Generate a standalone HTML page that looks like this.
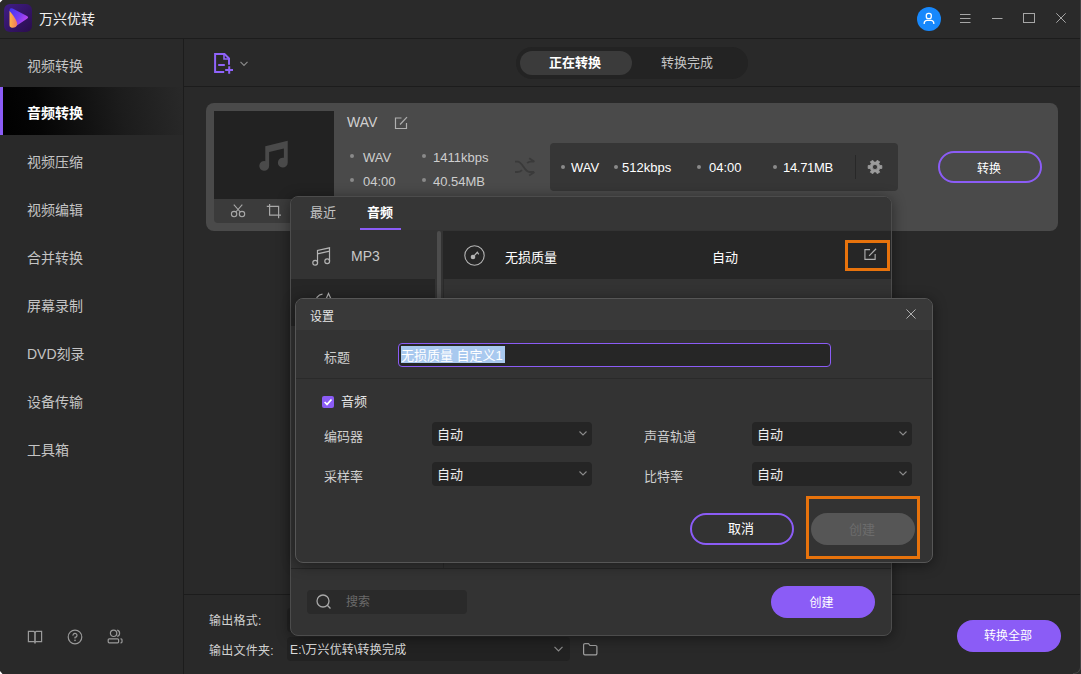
<!DOCTYPE html>
<html lang="zh-CN">
<head>
<meta charset="utf-8">
<title>万兴优转</title>
<style>
*{box-sizing:border-box;margin:0;padding:0}
html,body{width:1081px;height:674px;overflow:hidden;background:#292929}
body{position:relative;font-family:"Liberation Sans","Noto Sans CJK SC",sans-serif;font-size:14px;color:#c8c8c8}
.abs{position:absolute}
.t{position:absolute;white-space:nowrap;line-height:20px}
#titlebar{left:0;top:0;width:1081px;height:38px;background:#2a2a2a}
#titleline{left:0;top:38px;width:1081px;height:1px;background:#1c1c1c}
#sidebar{left:0;top:39px;width:183px;height:635px;background:#292929}
#sideline{left:183px;top:39px;width:1px;height:635px;background:#1c1c1c}
#main{left:184px;top:39px;width:897px;height:555px;background:#292929}
#topbar{left:184px;top:39px;width:897px;height:47px;background:#292929}
#topline{left:184px;top:86px;width:897px;height:1px;background:#1c1c1c}
#bottombar{left:184px;top:595px;width:897px;height:79px;background:#292929}
#bottomline{left:184px;top:594px;width:897px;height:1px;background:#1c1c1c}
.nav{left:27px;font-size:14px;color:#c4c4c4}
#active{left:0;top:87px;width:183px;height:48px;background:linear-gradient(80deg,#000 0%,#050505 22%,#1c1c1c 66%,#292929 100%)}
#activebar{left:0;top:87px;width:3px;height:48px;background:#8b5cf6}

.ico{position:absolute;overflow:visible}
#pill{left:516px;top:47px;width:232px;height:32px;border-radius:16px;background:#232323}
#pillact{left:520px;top:51px;width:112px;height:24px;border-radius:12px;background:#3b3b3b}
#card{left:206px;top:103px;width:852px;height:128px;border-radius:8px;background:#4a4a4a}
#thumb{left:214px;top:111px;width:120px;height:88px;background:#222}
#thumbbar{left:214px;top:199px;width:120px;height:24px;background:#3b3b3b;border-radius:0 0 4px 4px}
#outbox{left:550px;top:143px;width:348px;height:48px;border-radius:4px;background:#363636}
.dot{position:absolute;width:4px;height:4px;border-radius:2px;background:#8a8a8a}
.meta{font-size:13px;color:#cecece}
.btn-o{position:absolute;border:2px solid #8b5cf6;border-radius:16px;color:#fff;text-align:center;font-size:14px}
.btn-f{position:absolute;border-radius:16px;background:#8b5cf6;color:#fff;text-align:center;font-size:14px}

#popup{left:290px;top:196px;width:602px;height:440px;border-radius:8px;background:#333;border:1px solid #4c4c4c;box-shadow:0 2px 14px rgba(0,0,0,.45);overflow:hidden}
#popup .in{position:absolute}
#dlg{left:295px;top:298px;width:638px;height:265px;border-radius:8px;background:#333;border:1px solid #565656;box-shadow:0 2px 14px rgba(0,0,0,.45);overflow:hidden}
.sel{position:absolute;height:24px;border-radius:4px;background:#252525}
.lbl{font-size:13px;color:#cfcfcf}
.val{font-size:13px;color:#f0f0f0}
</style>
</head>
<body>
<div class="abs" id="titlebar"></div>
<div class="abs" id="titleline"></div>
<div class="abs" id="sidebar"></div>
<div class="abs" id="sideline"></div>
<div class="abs" id="main"></div>
<div class="abs" id="topbar"></div>
<div class="abs" id="topline"></div>
<div class="abs" id="bottombar"></div>
<div class="abs" id="bottomline"></div>

<!-- title bar -->
<svg class="abs" style="left:4px;top:4px" width="28" height="28" viewBox="0 0 28 28">
  <defs>
    <linearGradient id="lg1" x1="0" y1="0" x2="1" y2="1"><stop offset="0" stop-color="#3f1d86"/><stop offset="1" stop-color="#2a0d4c"/></linearGradient>
    <linearGradient id="lg2" x1="0" y1="0" x2="1" y2="0.600"><stop offset="0" stop-color="#3d35f5"/><stop offset="0.600" stop-color="#7a3cf2"/><stop offset="1" stop-color="#c046f0"/></linearGradient>
    <linearGradient id="lg3" x1="0" y1="0" x2="1" y2="0"><stop offset="0" stop-color="#ffb545"/><stop offset="1" stop-color="#f0785e"/></linearGradient>
  </defs>
  <rect width="28" height="28" rx="6" fill="url(#lg1)"/>
  <path d="M5.500 6.500 Q5.500 3.200 8.600 4.500 L23 12 Q25.200 13.400 23 14.800 L12.500 21.800 L5.500 8 Z" fill="url(#lg2)"/>
  <path d="M5.500 7 C9 11 13.500 17 13.200 20.500 C13 23 9.500 24.500 7.200 23.600 C5.800 23 5.500 22 5.500 20.500 Z" fill="url(#lg3)"/>
</svg>
<div class="t" style="left:39px;top:9px;font-size:14px;color:#f0f0f0">万兴优转</div>

<!-- sidebar -->
<div class="abs" id="active"></div>
<div class="abs" id="activebar"></div>
<div class="t nav" style="top:56px">视频转换</div>
<div class="t nav" style="top:103px;color:#fff;font-weight:bold">音频转换</div>
<div class="t nav" style="top:152px">视频压缩</div>
<div class="t nav" style="top:200px">视频编辑</div>
<div class="t nav" style="top:248px">合并转换</div>
<div class="t nav" style="top:296px">屏幕录制</div>
<div class="t nav" style="top:344px">DVD刻录</div>
<div class="t nav" style="top:392px">设备传输</div>
<div class="t nav" style="top:440px">工具箱</div>


<!-- window controls -->
<svg class="ico" style="left:917px;top:7px" width="24" height="24" viewBox="0 0 24 24">
  <circle cx="12" cy="12" r="12" fill="#1788fc"/>
  <rect x="9.300" y="6.400" width="5" height="5.200" rx="2.200" fill="none" stroke="#fff" stroke-width="1.300"/>
  <path d="M7.200 17 V16.200 A2.800 2.800 0 0 1 10 13.400 H14 A2.800 2.800 0 0 1 16.800 16.200 V17" fill="none" stroke="#fff" stroke-width="1.300"/>
</svg>
<svg class="ico" style="left:960px;top:14px" width="11" height="10" viewBox="0 0 11 10"><path d="M0 0.500H10.500M0 4.500H10.500M0 8.500H10.500" stroke="#a6a6a6" stroke-width="1" fill="none"/></svg>
<svg class="ico" style="left:992px;top:18px" width="11" height="1" viewBox="0 0 11 1"><path d="M0 0.500H10.500" stroke="#a6a6a6" stroke-width="1"/></svg>
<svg class="ico" style="left:1023px;top:13px" width="12" height="10" viewBox="0 0 12 10"><rect x="0.500" y="0.500" width="11" height="9" fill="none" stroke="#a6a6a6" stroke-width="1"/></svg>
<svg class="ico" style="left:1056px;top:13px" width="10" height="10" viewBox="0 0 10 10"><path d="M0.300 0.300L9.700 9.700M9.700 0.300L0.300 9.700" stroke="#a6a6a6" stroke-width="1" fill="none"/></svg>

<!-- top bar -->
<svg class="ico" style="left:213px;top:52px" width="22" height="23" viewBox="0 0 22 23">
  <path d="M11.200 20 H2.100 V2 H11.500 L16 6.500 V12.800" fill="none" stroke="#8f63fa" stroke-width="2" stroke-linejoin="miter"/>
  <path d="M11 2 V7 H16" fill="none" stroke="#8f63fa" stroke-width="1.600"/>
  <path d="M5.200 13 H11.800" stroke="#8f63fa" stroke-width="2"/>
  <path d="M16.200 14.300 V21.700 M12.200 18 H20" stroke="#8f63fa" stroke-width="2"/>
</svg>
<svg class="ico" style="left:240px;top:61px" width="8" height="6" viewBox="0 0 8 6"><path d="M0.500 0.800 L4 4.300 L7.500 0.800" fill="none" stroke="#8a8a8a" stroke-width="1.2"/></svg>
<div class="abs" id="pill"></div>
<div class="abs" id="pillact"></div>
<div class="t" style="left:549px;top:53px;font-size:13px;font-weight:bold;color:#fff">正在转换</div>
<div class="t" style="left:661px;top:53px;font-size:13px;color:#c4c4c4">转换完成</div>

<!-- file card -->
<div class="abs" id="card"></div>
<div class="abs" id="thumb"></div>
<div class="abs" id="thumbbar"></div>
<svg class="ico" style="left:256px;top:137px" width="35" height="36" viewBox="0 0 32 32">
  <path d="M8.500 8 L29 3 V23 A4.500 4.500 0 1 1 25.500 18.600 V10 L12 13.200 V26 A4.500 4.500 0 1 1 8.500 21.600 Z" fill="#4a4a4a"/>
</svg>
<div class="t" style="left:347px;top:112px;font-size:14px;color:#d0d0d0">WAV</div>
<svg class="ico" style="left:394px;top:116px" width="14" height="14" viewBox="0 0 14 14"><path d="M12.500 7 V12.500 H1.500 V2 H7.500" fill="none" stroke="#b0b0b0" stroke-width="1.2"/><path d="M6 8.500 L13 1.200" stroke="#b0b0b0" stroke-width="1.2"/></svg>
<div class="dot" style="left:350px;top:154px"></div><div class="t meta" style="left:363px;top:148px">WAV</div>
<div class="dot" style="left:422px;top:154px"></div><div class="t meta" style="left:433px;top:148px">1411kbps</div>
<div class="dot" style="left:350px;top:178px"></div><div class="t meta" style="left:363px;top:172px">04:00</div>
<div class="dot" style="left:422px;top:178px"></div><div class="t meta" style="left:433px;top:172px">40.54MB</div>
<svg class="ico" style="left:514px;top:157px" width="22" height="20" viewBox="0 0 22 20">
  <path d="M1 4.700 H3.500 C9 4.700 10 15 15.500 15 H20 M1 15 H3.500 C5.500 15 7 14.300 8 13.200 M13.200 6.200 C14 5.300 15 4.700 16.500 4.700 H20 M15.200 1.300 L20.500 4.700 M20.500 15 L15.200 18.400" fill="none" stroke="#3a3a3a" stroke-width="1.800" stroke-linejoin="round"/>
</svg>
<div class="abs" id="outbox"></div>
<div class="dot" style="left:561px;top:165px"></div><div class="t meta" style="left:571px;top:158px;color:#fff">WAV</div>
<div class="dot" style="left:614px;top:165px"></div><div class="t meta" style="left:622px;top:158px;color:#fff">512kbps</div>
<div class="dot" style="left:697px;top:165px"></div><div class="t meta" style="left:709px;top:158px;color:#fff">04:00</div>
<div class="dot" style="left:773px;top:165px"></div><div class="t meta" style="left:783px;top:158px;color:#fff;letter-spacing:-0.3px">14.71MB</div>
<div class="abs" style="left:855px;top:155px;width:1px;height:24px;background:#282828"></div>
<svg class="ico" style="left:867px;top:159px" width="16" height="16" viewBox="0 0 16 16"><path fill="#9c9c9c" fill-rule="evenodd" stroke="#9c9c9c" stroke-width="0.800" stroke-linejoin="round" d="M12.76 6.45 L14.85 6.54 L14.85 9.46 L12.76 9.55 L11.72 11.35 L12.68 13.20 L10.16 14.66 L9.04 12.89 L6.96 12.89 L5.84 14.66 L3.32 13.20 L4.28 11.35 L3.24 9.55 L1.15 9.46 L1.15 6.54 L3.24 6.45 L4.28 4.65 L3.32 2.80 L5.84 1.34 L6.96 3.11 L9.04 3.11 L10.16 1.34 L12.68 2.80 L11.72 4.65 Z M10.60 8.00 A2.60 2.60 0 1 0 5.40 8.00 A2.60 2.60 0 1 0 10.60 8.00 Z"/></svg>
<div class="btn-o" style="left:938px;top:151px;width:104px;height:32px;line-height:32px;font-size:12px;padding-right:2px">转换</div>
<!-- thumb tools -->
<svg class="ico" style="left:230px;top:204px" width="16" height="14" viewBox="0 0 16 14">
  <circle cx="4.100" cy="10.100" r="2.700" fill="none" stroke="#a8a8a8" stroke-width="1.100"/><circle cx="12" cy="10.100" r="2.700" fill="none" stroke="#a8a8a8" stroke-width="1.100"/>
  <path d="M3.800 0.600 L10.300 8 M12.300 0.600 L5.800 8" fill="none" stroke="#a8a8a8" stroke-width="1.100"/>
</svg>
<svg class="ico" style="left:266px;top:204px" width="15" height="15" viewBox="0 0 15 15"><path d="M3.600 0 V11.200 H15 M0.800 2.400 H12.600 V14.200" fill="none" stroke="#a8a8a8" stroke-width="1.200"/></svg>

<!-- bottom bar -->
<div class="t" style="left:209px;top:611px;font-size:12px;color:#d0d0d0;letter-spacing:0.25px">输出格式:</div>
<div class="t" style="left:209px;top:641px;font-size:12px;color:#d0d0d0;letter-spacing:0.25px">输出文件夹:</div>
<div class="abs" style="left:287px;top:608px;width:283px;height:24px;border-radius:4px;background:#222"></div>
<div class="abs" style="left:287px;top:637px;width:283px;height:24px;border-radius:4px;background:#222"></div>
<div class="t" style="left:290px;top:640px;font-size:12px;color:#dcdcdc;letter-spacing:0.2px">E:\万兴优转\转换完成</div>
<svg class="ico" style="left:554px;top:646px" width="9" height="6" viewBox="0 0 9 6"><path d="M0.500 0.800 L4.500 4.800 L8.500 0.800" fill="none" stroke="#8a8a8a" stroke-width="1.200"/></svg>
<svg class="ico" style="left:583px;top:643px" width="15" height="12.500" viewBox="0 0 15 13" preserveAspectRatio="none"><path d="M0.600 2 A1.400 1.400 0 0 1 2 0.600 H5.500 L7 2.600 H12.500 A1.400 1.400 0 0 1 13.900 4 V11 A1.400 1.400 0 0 1 12.500 12.400 H2 A1.400 1.400 0 0 1 0.600 11 Z" fill="none" stroke="#a0a0a0" stroke-width="1.200"/></svg>
<div class="btn-f" style="left:957px;top:620px;width:104px;height:32px;line-height:33px;font-size:12px;padding-right:2px">转换全部</div>

<!-- sidebar bottom icons -->
<svg class="ico" style="left:27px;top:630px" width="16" height="14" viewBox="0 0 16 14"><path d="M1.400 1.400 H6.800 L8 2.200 L9.200 1.400 H14.600 V11.600 H1.400 Z" fill="none" stroke="#9a9a9a" stroke-width="1.200"/><path d="M8 2 V13.500" stroke="#9a9a9a" stroke-width="1.600"/></svg>
<svg class="ico" style="left:67px;top:629px" width="16" height="16" viewBox="0 0 16 16"><circle cx="8" cy="8" r="6.800" fill="none" stroke="#9a9a9a" stroke-width="1.200"/><path d="M6 6.600 A2 2 0 1 1 8 8.400 V9.600" fill="none" stroke="#9a9a9a" stroke-width="1.200"/><circle cx="8" cy="11.400" r="0.800" fill="#9a9a9a"/></svg>
<svg class="ico" style="left:107px;top:629px" width="16" height="15" viewBox="0 0 16 15"><circle cx="6.600" cy="4.300" r="3.200" fill="none" stroke="#9a9a9a" stroke-width="1.200"/><rect x="1.200" y="9.800" width="10.400" height="4" rx="1" fill="none" stroke="#9a9a9a" stroke-width="1.200"/><path d="M10.200 1.200 A3.200 3.200 0 0 1 10.200 7.400 M13.500 9.800 H14 A1 1 0 0 1 15 10.800 V12.800 A1 1 0 0 1 14 13.800 H13.500" fill="none" stroke="#9a9a9a" stroke-width="1.200"/></svg>

<!-- format popup -->
<div class="abs" id="popup">
  <div class="in" style="left:0;top:0;width:600px;height:33px;background:#363636"></div>
  <div class="t" style="left:19px;top:6px;font-size:13px;color:#c4c4c4">最近</div>
  <div class="t" style="left:76px;top:6px;font-size:13px;color:#fff;font-weight:bold">音频</div>
  <div class="in" style="left:69px;top:31px;width:41px;height:2px;background:#8b5cf6"></div>
  <div class="in" style="left:0;top:34px;width:144px;height:48px;background:#333"></div>
  <div class="in" style="left:0;top:82px;width:144px;height:47px;background:#262626"></div>
  <div class="in" style="left:146px;top:34px;width:4px;height:300px;border-radius:2px;background:#4d4d4d"></div>
  <div class="in" style="left:152px;top:34px;width:448px;height:48px;background:#262626"></div>
  <div class="in" style="left:152px;top:82px;width:1px;height:290px;background:#2a2a2a"></div>
  <svg class="ico" style="left:21px;top:50px" width="19" height="19" viewBox="0 0 19 19"><path d="M5.500 15.500 V3.500 L17.500 0.800 V14 M5.500 6.800 L17.500 4.200" fill="none" stroke="#b4b4b4" stroke-width="1.200"/><circle cx="3.200" cy="15.800" r="2.400" fill="none" stroke="#b4b4b4" stroke-width="1.200"/><circle cx="15.200" cy="14.300" r="2.400" fill="none" stroke="#b4b4b4" stroke-width="1.200"/></svg>
  <div class="t" style="left:60px;top:49px;font-size:14px;color:#c8c8c8">MP3</div>
  <svg class="ico" style="left:22px;top:94px" width="22" height="22" viewBox="0 0 22 22"><path d="M2.500 12 A8 8 0 0 1 9.500 3.200 M13 8 L15.500 2.500 L18 8" fill="none" stroke="#b4b4b4" stroke-width="1.200"/></svg>
  <svg class="ico" style="left:173px;top:48px" width="21" height="21" viewBox="0 0 21 21"><circle cx="10.500" cy="10.500" r="9.700" fill="none" stroke="#b4b4b4" stroke-width="1.100"/><circle cx="9" cy="12" r="2.300" fill="#b4b4b4"/><path d="M10.300 10.700 L13.300 7.300 L14.800 9.300" fill="none" stroke="#b4b4b4" stroke-width="1.200"/></svg>
  <div class="t" style="left:214px;top:51px;font-size:13px;color:#fff">无损质量</div>
  <div class="t" style="left:421px;top:51px;font-size:13px;color:#fff">自动</div>
  <div class="in" style="left:554px;top:43px;width:45px;height:31px;border:3px solid #e8730c"></div>
  <svg class="ico" style="left:573px;top:50.500px" width="13" height="13" viewBox="0 0 14 14"><path d="M12 6.500 V12.300 H1 V1.700 H6.500" fill="none" stroke="#b0b0b0" stroke-width="1.200"/><path d="M5.500 8.500 L13 0.800" stroke="#b0b0b0" stroke-width="1.200"/></svg>
  <div class="in" style="left:0;top:371px;width:600px;height:1px;background:#262626"></div>
  <div class="in" style="left:16px;top:393px;width:160px;height:24px;border-radius:4px;background:#2a2a2a"></div>
  <svg class="ico" style="left:25px;top:397px" width="16" height="16" viewBox="0 0 16 16"><circle cx="7" cy="7" r="6" fill="none" stroke="#a8a8a8" stroke-width="1.300"/><path d="M11.300 11.300 L14.500 14.500" stroke="#a8a8a8" stroke-width="1.300"/></svg>
  <div class="t" style="left:55px;top:395px;font-size:12px;color:#6a6a6a">搜索</div>
  <div class="btn-f" style="left:480px;top:389px;width:104px;height:32px;line-height:35px;font-size:12px;padding-right:3px">创建</div>
</div>

<!-- settings dialog -->
<div class="abs" id="dlg">
  <div class="abs" style="left:0;top:0;width:636px;height:31px;background:#393939"></div>
  <div class="t" style="left:14px;top:8px;font-size:12px;color:#e6e6e6">设置</div>
  <svg class="ico" style="left:610px;top:10px" width="10" height="10" viewBox="0 0 11 11"><path d="M0.500 0.500 L10.500 10.500 M10.500 0.500 L0.500 10.500" stroke="#b0b0b0" stroke-width="1.100"/></svg>
  <div class="t lbl" style="left:28px;top:49px">标题</div>
  <div class="abs" style="left:102px;top:44px;width:433px;height:24px;border:1px solid #8b5cf6;border-radius:4px;background:#262626"></div>
  <div class="abs" style="left:105px;top:47px;width:104px;height:17px;background:#a9c9ef"></div>
  <div class="t" style="left:105px;top:48px;font-size:13px;color:#fff;line-height:18px">无损质量 自定义1</div>
  <div class="abs" style="left:0;top:79px;width:636px;height:1px;background:#2a2a2a"></div>
  <div class="abs" style="left:26px;top:97px;width:12px;height:12px;border-radius:2px;background:#8b5cf6"></div>
  <svg class="ico" style="left:26px;top:97px" width="12" height="12" viewBox="0 0 12 12"><path d="M2.600 6 L5 8.400 L9.500 3.500" fill="none" stroke="#fff" stroke-width="1.700"/></svg>
  <div class="t lbl" style="left:45px;top:93px;color:#e6e6e6">音频</div>
  <div class="t lbl" style="left:28px;top:128px">编码器</div>
  <div class="t lbl" style="left:28px;top:168px">采样率</div>
  <div class="t lbl" style="left:348px;top:128px">声音轨道</div>
  <div class="t lbl" style="left:348px;top:168px">比特率</div>
  <div class="sel" style="left:136px;top:123px;width:160px"></div>
  <div class="sel" style="left:136px;top:163px;width:160px"></div>
  <div class="sel" style="left:456px;top:123px;width:160px"></div>
  <div class="sel" style="left:456px;top:163px;width:160px"></div>
  <div class="t val" style="left:141px;top:126px">自动</div>
  <div class="t val" style="left:141px;top:166px">自动</div>
  <div class="t val" style="left:461px;top:126px">自动</div>
  <div class="t val" style="left:461px;top:166px">自动</div>
  <svg class="ico" style="left:283px;top:132px" width="8" height="5" viewBox="0 0 8 5"><path d="M0.500 0.500 L4 4 L7.500 0.500" fill="none" stroke="#8a8a8a" stroke-width="1.100"/></svg>
  <svg class="ico" style="left:283px;top:172px" width="8" height="5" viewBox="0 0 8 5"><path d="M0.500 0.500 L4 4 L7.500 0.500" fill="none" stroke="#8a8a8a" stroke-width="1.100"/></svg>
  <svg class="ico" style="left:603px;top:132px" width="8" height="5" viewBox="0 0 8 5"><path d="M0.500 0.500 L4 4 L7.500 0.500" fill="none" stroke="#8a8a8a" stroke-width="1.100"/></svg>
  <svg class="ico" style="left:603px;top:172px" width="8" height="5" viewBox="0 0 8 5"><path d="M0.500 0.500 L4 4 L7.500 0.500" fill="none" stroke="#8a8a8a" stroke-width="1.100"/></svg>
  <div class="btn-o" style="left:394px;top:214px;width:104px;height:32px;line-height:28px;font-size:13px;padding-right:2px">取消</div>
  <div class="abs" style="left:515px;top:214px;width:104px;height:32px;border-radius:16px;background:#565656;color:#6c6c6c;text-align:center;line-height:33px;font-size:13px;padding-right:2px">创建</div>
  <div class="abs" style="left:510px;top:197px;width:114px;height:63px;border:3px solid #e8730c"></div>
</div>

<div class="abs" style="left:1080px;top:0;width:1px;height:670px;background:#444"></div>
<div class="abs" style="left:1073px;top:666px;width:8px;height:8px;border-right:1px solid #444;border-bottom:1px solid #444;border-bottom-right-radius:7px;box-shadow:3px 3px 0 2px #2b2b2b"></div>
<svg class="ico" style="left:0;top:671px" width="3" height="3" viewBox="0 0 3 3"><path d="M0 0 L0 3 L2.500 3 Z" fill="#fff"/></svg>
<svg class="ico" style="left:0;top:0" width="3" height="3" viewBox="0 0 3 3"><path d="M0 0 H2.500 L0 2.500 Z" fill="#fff"/></svg>
</body>
</html>
